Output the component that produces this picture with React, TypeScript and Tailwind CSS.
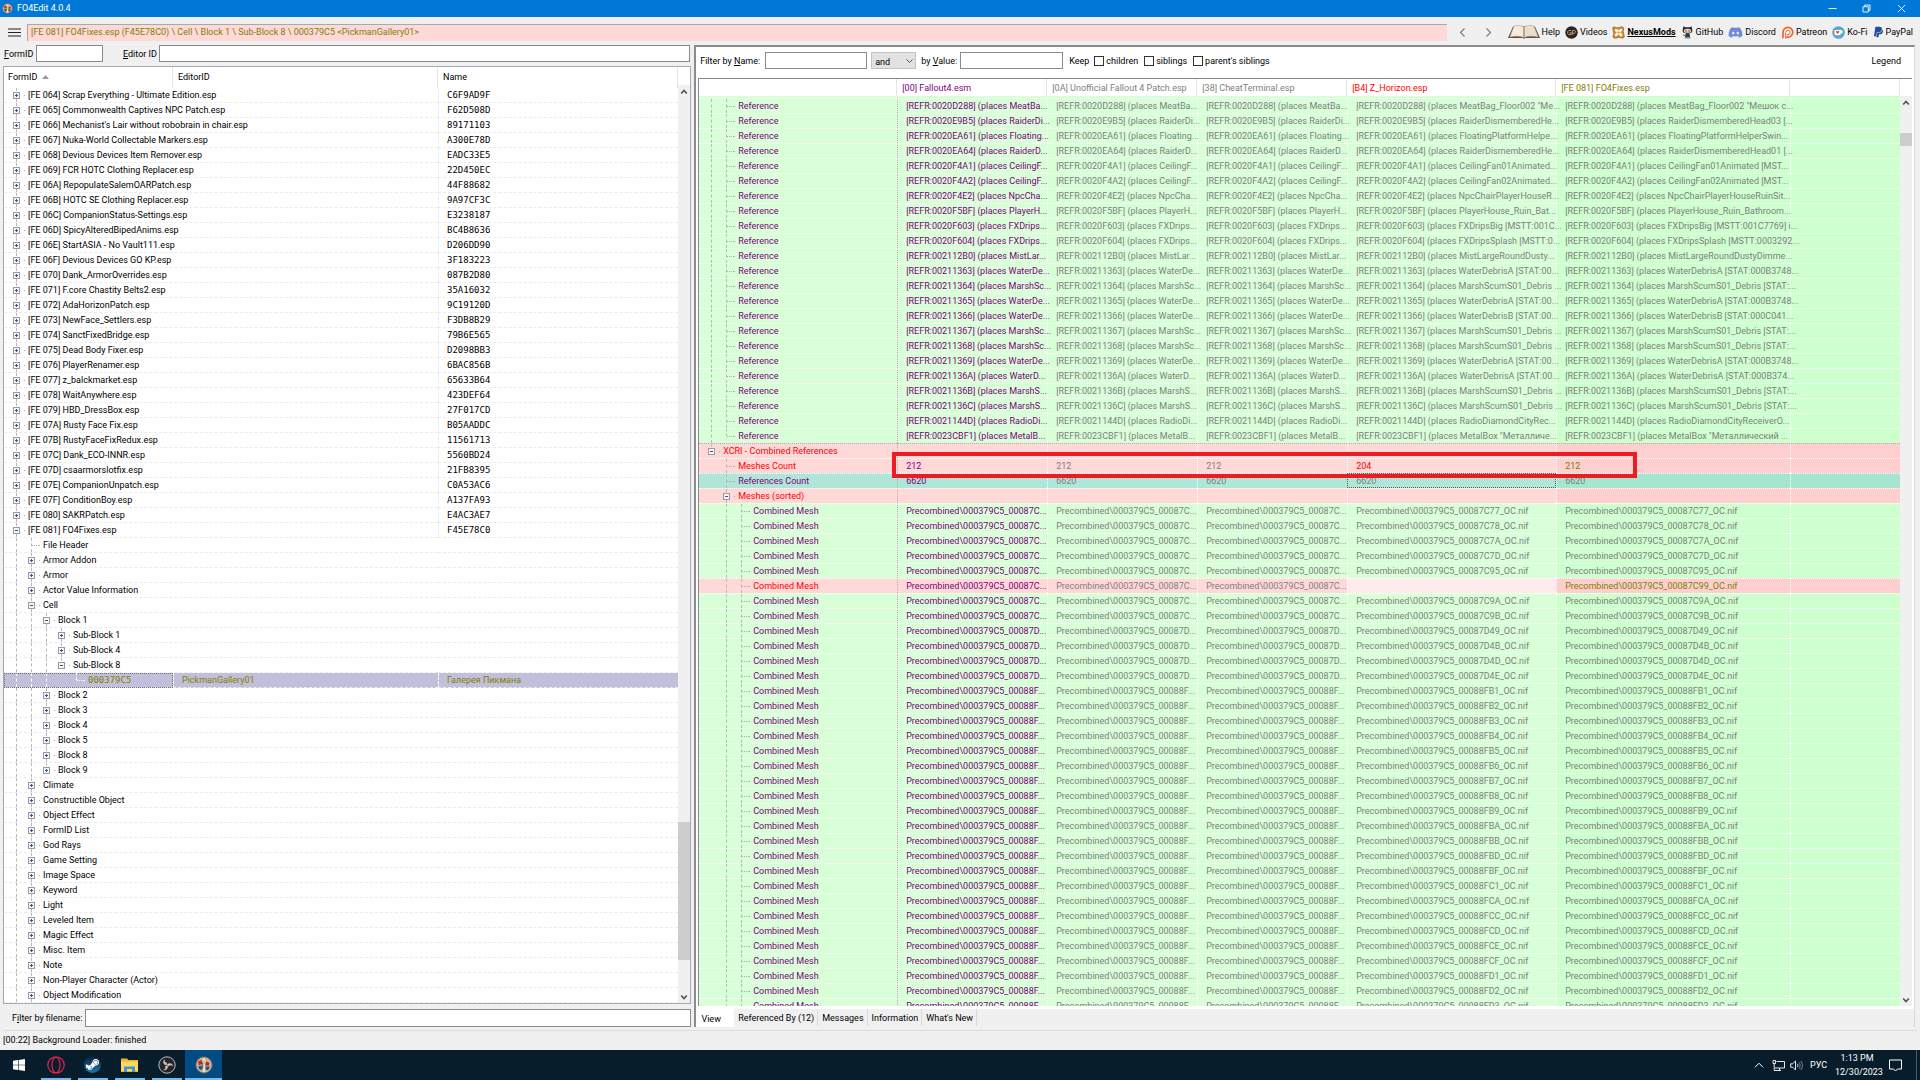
import type { ReactNode } from "react";
import { clsx } from "clsx";
import { FaDiscord, FaPaypal, FaSteamSymbol } from "react-icons/fa";

/* ---------- data ---------- */

interface TreeNode {
  label: string;
  level: number;
  state?: "open" | "closed";
  /** one flag per ancestor level, true when its guide line runs through the row */
  guides?: boolean[];
  last?: boolean;
  name?: string;
  editorId?: string;
  selected?: boolean;
}

const plugins: [string, string][] = [
  ["[FE 064] Scrap Everything - Ultimate Edition.esp", "C6F9AD9F"],
  ["[FE 065] Commonwealth Captives NPC Patch.esp", "F62D508D"],
  ["[FE 066] Mechanist's Lair without robobrain in chair.esp", "89171103"],
  ["[FE 067] Nuka-World Collectable Markers.esp", "A300E78D"],
  ["[FE 068] Devious Devices Item Remover.esp", "EADC33E5"],
  ["[FE 069] FCR HOTC Clothing Replacer.esp", "22D450EC"],
  ["[FE 06A] RepopulateSalemOARPatch.esp", "44F88682"],
  ["[FE 06B] HOTC SE Clothing Replacer.esp", "9A97CF3C"],
  ["[FE 06C] CompanionStatus-Settings.esp", "E3238187"],
  ["[FE 06D] SpicyAlteredBipedAnims.esp", "BC4B8636"],
  ["[FE 06E] StartASIA - No Vault111.esp", "D206DD90"],
  ["[FE 06F] Devious Devices GO KP.esp", "3F183223"],
  ["[FE 070] Dank_ArmorOverrides.esp", "087B2D80"],
  ["[FE 071] F.core Chastity Belts2.esp", "35A16032"],
  ["[FE 072] AdaHorizonPatch.esp", "9C19120D"],
  ["[FE 073] NewFace_Settlers.esp", "F3DB8B29"],
  ["[FE 074] SanctFixedBridge.esp", "79B6E565"],
  ["[FE 075] Dead Body Fixer.esp", "D2098BB3"],
  ["[FE 076] PlayerRenamer.esp", "6BAC856B"],
  ["[FE 077] z_balckmarket.esp", "65633B64"],
  ["[FE 078] WaitAnywhere.esp", "423DEF64"],
  ["[FE 079] HBD_DressBox.esp", "27F017CD"],
  ["[FE 07A] Rusty Face Fix.esp", "B05AADDC"],
  ["[FE 07B] RustyFaceFixRedux.esp", "11561713"],
  ["[FE 07C] Dank_ECO-INNR.esp", "5560BD24"],
  ["[FE 07D] csaarmorslotfix.esp", "21FB8395"],
  ["[FE 07E] CompanionUnpatch.esp", "C0A53AC6"],
  ["[FE 07F] ConditionBoy.esp", "A137FA93"],
  ["[FE 080] SAKRPatch.esp", "E4AC3AE7"],
];

const group = (label: string): TreeNode => ({ label, level: 1, state: "closed" });
const block = (label: string, last = false): TreeNode => ({ label, level: 2, state: "closed", last });

const nodes: TreeNode[] = [
  ...plugins.map(([label, name]): TreeNode => ({ label, name, level: 0, state: "closed" })),
  { label: "[FE 081] FO4Fixes.esp", name: "F45E78C0", level: 0, state: "open" },
  { label: "File Header", level: 1 },
  group("Armor Addon"),
  group("Armor"),
  group("Actor Value Information"),
  { label: "Cell", level: 1, state: "open" },
  { label: "Block 1", level: 2, state: "open" },
  { label: "Sub-Block 1", level: 3, state: "closed" },
  { label: "Sub-Block 4", level: 3, state: "closed" },
  { label: "Sub-Block 8", level: 3, state: "open", last: true },
  {
    label: "000379C5",
    level: 4,
    guides: [true, true, true, false],
    last: true,
    editorId: "PickmanGallery01",
    name: "Галерея Пикмана",
    selected: true,
  },
  block("Block 2"),
  block("Block 3"),
  block("Block 4"),
  block("Block 5"),
  block("Block 8"),
  block("Block 9", true),
  ...[
    "Climate",
    "Constructible Object",
    "Object Effect",
    "FormID List",
    "God Rays",
    "Game Setting",
    "Image Space",
    "Keyword",
    "Light",
    "Leveled Item",
    "Magic Effect",
    "Misc. Item",
    "Note",
    "Non-Player Character (Actor)",
    "Object Modification",
  ].map(group),
];

// id, short text, text in the Z_Horizon column, text in the FO4Fixes column
const references: [string, string, string, string][] = [
  ["0020D288", "MeatBa...", 'MeatBag_Floor002 "Me...', 'MeatBag_Floor002 "Мешок с...'],
  ["0020E9B5", "RaiderDi...", "RaiderDismemberedHe...", "RaiderDismemberedHead03 [..."],
  ["0020EA61", "Floating...", "FloatingPlatformHelpe...", "FloatingPlatformHelperSwin..."],
  ["0020EA64", "RaiderD...", "RaiderDismemberedHe...", "RaiderDismemberedHead01 [..."],
  ["0020F4A1", "CeilingF...", "CeilingFan01Animated...", "CeilingFan01Animated [MST..."],
  ["0020F4A2", "CeilingF...", "CeilingFan02Animated...", "CeilingFan02Animated [MST..."],
  ["0020F4E2", "NpcCha...", "NpcChairPlayerHouseR...", "NpcChairPlayerHouseRuinSit..."],
  ["0020F5BF", "PlayerH...", "PlayerHouse_Ruin_Bat...", "PlayerHouse_Ruin_Bathroom..."],
  ["0020F603", "FXDrips...", "FXDripsBig [MSTT:001C...", "FXDripsBig [MSTT:001C7769] i..."],
  ["0020F604", "FXDrips...", "FXDripsSplash [MSTT:0...", "FXDripsSplash [MSTT:0003292..."],
  ["002112B0", "MistLar...", "MistLargeRoundDusty...", "MistLargeRoundDustyDimme..."],
  ["00211363", "WaterDe...", "WaterDebrisA [STAT:00...", "WaterDebrisA [STAT:000B3748..."],
  ["00211364", "MarshSc...", "MarshScumS01_Debris ...", "MarshScumS01_Debris [STAT:..."],
  ["00211365", "WaterDe...", "WaterDebrisA [STAT:00...", "WaterDebrisA [STAT:000B3748..."],
  ["00211366", "WaterDe...", "WaterDebrisB [STAT:00...", "WaterDebrisB [STAT:000C041..."],
  ["00211367", "MarshSc...", "MarshScumS01_Debris ...", "MarshScumS01_Debris [STAT:..."],
  ["00211368", "MarshSc...", "MarshScumS01_Debris ...", "MarshScumS01_Debris [STAT:..."],
  ["00211369", "WaterDe...", "WaterDebrisA [STAT:00...", "WaterDebrisA [STAT:000B3748..."],
  ["0021136A", "WaterD...", "WaterDebrisA [STAT:00...", "WaterDebrisA [STAT:000B374..."],
  ["0021136B", "MarshS...", "MarshScumS01_Debris ...", "MarshScumS01_Debris [STAT:..."],
  ["0021136C", "MarshS...", "MarshScumS01_Debris ...", "MarshScumS01_Debris [STAT:..."],
  ["0021144D", "RadioDi...", "RadioDiamondCityRec...", "RadioDiamondCityReceiverO..."],
  ["0023CBF1", "MetalB...", 'MetalBox "Металличе...', 'MetalBox "Металлический ...'],
];

const meshes = [
  "87C77", "87C78", "87C7A", "87C7D", "87C95", "87C99", "87C9A", "87C9B",
  "87D49", "87D4B", "87D4D", "87D4E", "88FB1", "88FB2", "88FB3", "88FB4",
  "88FB5", "88FB6", "88FB7", "88FB8", "88FB9", "88FBA", "88FBB", "88FBD",
  "88FBF", "88FC1", "88FCA", "88FCC", "88FCD", "88FCE", "88FCF", "88FD1",
  "88FD2", "88FD3",
];

type Tone = "same" | "conflict" | "focused";

const tones: Record<Tone, { light: string; dark: string; label: string; own: string }> = {
  same: { light: "bg-[#d8ffd8]", dark: "bg-[#ceffce]", label: "text-[#800080]", own: "text-[#808080]" },
  conflict: { light: "bg-[#ffd8d8]", dark: "bg-[#ffcece]", label: "text-[#ff0000]", own: "text-[#808000]" },
  focused: { light: "bg-[#b0e6d8]", dark: "bg-[#a6e6ce]", label: "text-[#800080]", own: "text-[#808080]" },
};

/* ---------- small parts ---------- */

function Expander({ open, label }: { open: boolean; label: string }) {
  return (
    <button type="button" aria-label={`${open ? "Collapse" : "Expand"} ${label}`} className="relative block size-[7px]">
      <svg viewBox="0 0 7 7" className="block size-[7px]">
        <rect x=".5" y=".5" width="6" height="6" fill="#f6f6f6" stroke="#9b9b9b" />
        <path d={open ? "M2 3.5h3" : "M2 3.5h3M3.5 2v3"} stroke="#3c50a0" />
      </svg>
    </button>
  );
}

function Guide({ visible = true, half = false, white = false }: { visible?: boolean; half?: boolean; white?: boolean }) {
  return (
    <span className="flex w-[15px] shrink-0 justify-center self-stretch">
      {visible && (
        <span className={clsx("w-px border-l border-dashed", half ? "h-1/2" : "h-full", white ? "border-white" : "border-[#b9b9b9]")} />
      )}
    </span>
  );
}

interface TreeLabelProps {
  level: number;
  state?: "open" | "closed";
  guides?: boolean[];
  last?: boolean;
  white?: boolean;
  label: string;
  children: ReactNode;
}

/** Indentation guides, the expander and the text of a tree row */
function TreeLabel({ level, state, guides, last, white, label, children }: TreeLabelProps) {
  return (
    <div className="flex h-[14px] items-center overflow-hidden">
      {Array.from({ length: level }, (_, i) => (
        <Guide key={i} visible={guides ? guides[i] : true} white={white} />
      ))}
      <span className="relative flex shrink-0 self-stretch">
        <Guide half={last} white={white} />
        {state ? (
          <span className="absolute inset-0 flex items-center justify-center">
            <Expander open={state === "open"} label={label} />
          </span>
        ) : (
          <span className={clsx("absolute top-1/2 right-0 w-[7px] border-t border-dotted", white ? "border-white" : "border-[#b0b0b0]")} />
        )}
      </span>
      <span className={clsx("mr-[3px] w-px shrink-0 border-t border-dotted", white ? "border-white" : "border-[#b0b0b0]")} />
      {children}
    </div>
  );
}

function ArrowIcon({ down = false }: { down?: boolean }) {
  return (
    <svg viewBox="0 0 8 8" className="size-2" fill="none" stroke="#505050" strokeWidth="1.6">
      <path d={down ? "M1.2 2.5 4 5.5 6.8 2.5" : "M1.2 5.5 4 2.5 6.8 5.5"} />
    </svg>
  );
}

function ScrollBar({ children, label }: { children: ReactNode; label: string }) {
  return (
    <div className="flex min-h-0 w-3 flex-1 flex-col bg-[#f0f0f0]">
      <button type="button" aria-label={`Scroll ${label} up`} className="flex h-[13px] items-center justify-center">
        <ArrowIcon />
      </button>
      {children}
      <button type="button" aria-label={`Scroll ${label} down`} className="flex h-[13px] items-center justify-center">
        <ArrowIcon down />
      </button>
    </div>
  );
}

function AppIcon({ className }: { className: string }) {
  return (
    <svg viewBox="0 0 18 18" className={className}>
      <circle cx="9" cy="9" r="8.3" fill="#b9b5a6" stroke="#5a564c" strokeWidth="1" />
      <path d="M3 5.5 6.5 4l.8 3.8L4 9.5z" fill="#c8261d" />
      <path d="M11 5.2 14.6 7l-1.2 3-2.6-1z" fill="#c8261d" />
      <path d="M3.2 10.5 7 9.6l-.4 4.6-2-.7z" fill="#23508f" />
      <path d="M11.4 10.4l3.4.4-1.6 3.2-2 .3z" fill="#23508f" />
      <path d="M7.6 2.5h2.6l.5 5.2-.6 8H7.8l.3-7z" fill="#f1e7c4" />
      <path d="M8.6 4.5h1l.2 3h-1.5z" fill="#d6a63a" />
      <path d="M6.4 6.5l1.3.6v6M10.9 7v6.5" stroke="#3a3732" strokeWidth=".7" fill="none" />
    </svg>
  );
}

/* ---------- window chrome ---------- */

function TitleBar() {
  return (
    <header className="flex h-[17px] shrink-0 items-center bg-[#0078d7] pr-px pl-[2px] text-white">
      <AppIcon className="size-[11px]" />
      <h1 className="ml-1 flex-1 leading-[17px]">FO4Edit 4.0.4</h1>
      <button type="button" aria-label="Minimize" className="flex h-full w-[34px] items-center justify-center">
        <svg viewBox="0 0 9 9" className="size-[9px]" stroke="#fff" strokeWidth=".9"><path d="M.5 4.5h8" /></svg>
      </button>
      <button type="button" aria-label="Restore" className="flex h-full w-[34px] items-center justify-center">
        <svg viewBox="0 0 9 9" className="size-[9px]" fill="none" stroke="#fff" strokeWidth=".9"><path d="M1 2.7h5.3V8H1zM2.7 2.7V1H8v5.3H6.3" /></svg>
      </button>
      <button type="button" aria-label="Close" className="flex h-full w-9 items-center justify-center">
        <svg viewBox="0 0 9 9" className="size-[9px]" stroke="#fff" strokeWidth=".9"><path d="M1 1l7 7M8 1 1 8" /></svg>
      </button>
    </header>
  );
}

function BookIcon() {
  return (
    <svg viewBox="0 0 32 14" className="h-[14px] w-8">
      <path d="M5 1.5 0 13h14.500l1.500.8 1.500-.8H32L27 1.500z" fill="#6b4a34" />
      <path d="M6 1C9.500 0 13.500.3 16 2.200V12.600C12 10.800 6.500 10.800 1.800 12z" fill="#f3ebdf" stroke="#a89684" strokeWidth=".5" />
      <path d="M26 1C22.500 0 18.500.3 16 2.200V12.600C20 10.800 25.500 10.800 30.200 12z" fill="#e9ddcc" stroke="#a89684" strokeWidth=".5" />
      <path d="M16 2.200v10.400" stroke="#8a7460" strokeWidth=".8" />
    </svg>
  );
}

function VideosIcon() {
  return (
    <svg viewBox="0 0 13 13" className="size-[13px]">
      <circle cx="6.500" cy="6.500" r="6.200" fill="#2b2622" />
      <path d="M6 4.500H3.800L2.800 5.500v2.200l1 1H6V6.700H4.800M7.300 9V4.500h2.200l.9.8v1l-.9.8H7.300" fill="none" stroke="#c9ab7c" strokeWidth=".9" />
    </svg>
  );
}

function NexusIcon() {
  return (
    <svg viewBox="0 0 13 13" className="size-[13px]">
      <path d="M1.500.8 5 1.800 10.500.7l1.300 1.200-.6 3.300 1.200 5.800-1.500 1.200-3.600-.8-5 .9L.8 10.800l1-3.600L.7 2z" fill="#dd8a2c" stroke="#6e5a48" strokeWidth=".6" />
      <path d="M3 3.200 5.200 3l1.300 1.600L8.200 2.900l2-.2-.1 2-1.900 1.800 2 1.600v2.200l-2.100-.1-1.600-1.900L4.800 10l-2 .2.200-2 1.700-1.700L3 5z" fill="#fff3e0" />
      <circle cx="6.500" cy="6.500" r="1.100" fill="#dd8a2c" />
    </svg>
  );
}

function GitHubIcon() {
  return (
    <svg viewBox="0 0 13 13" className="size-[13px]">
      <path d="M2.300.3 4.300 1.300h4.400l2-1 .3 2.500c.9 1.700.3 3.700-1 4.300H3C1.700 6.500 1.100 4.400 2 2.800z" fill="#2a2a2c" />
      <ellipse cx="6.500" cy="4.900" rx="3.700" ry="2.100" fill="#f0cdb8" />
      <circle cx="4.900" cy="4.900" r=".7" fill="#59312a" />
      <circle cx="8.100" cy="4.900" r=".7" fill="#59312a" />
      <path d="M5 7.200h3.200l.5 4.300H4.500zM4.500 10 2 8.700" fill="#2e3b45" stroke="#2e3b45" strokeWidth=".8" />
      <ellipse cx="6.500" cy="12" rx="3.500" ry=".8" fill="#8fb4c6" />
    </svg>
  );
}

function PatreonIcon() {
  return (
    <svg viewBox="0 0 13 13" className="size-[13px]">
      <path d="M2 12.200V6.500a4.900 4.900 0 1 1 4.900 4.700H5" fill="none" stroke="#f1622a" strokeWidth="1.700" />
      <path d="M4.700 12.600V6.500a2.200 2.200 0 1 1 2.300 2.200H6" fill="#fff" stroke="#f1622a" strokeWidth="1" />
    </svg>
  );
}

function KofiIcon() {
  return (
    <svg viewBox="0 0 13 13" className="size-[13px]">
      <circle cx="6.500" cy="6.500" r="6.300" fill="#57a8cc" />
      <path d="M2.500 4h6.300c2.600 0 2.600 3.600 0 3.600-.2 1.200-.8 1.700-1.800 1.700H4.300c-1.200 0-1.800-.8-1.800-2z" fill="#fff" />
      <path d="M5.600 8 3.900 6.300c-.6-.9.800-1.900 1.700-.8.900-1.100 2.300-.1 1.700.8z" fill="#f0484c" />
    </svg>
  );
}

const links: { label: string; icon: ReactNode; strong?: boolean }[] = [
  { label: "Help", icon: <BookIcon /> },
  { label: "Videos", icon: <VideosIcon /> },
  { label: "NexusMods", icon: <NexusIcon />, strong: true },
  { label: "GitHub", icon: <GitHubIcon /> },
  { label: "Discord", icon: <FaDiscord className="size-[15px] text-[#7289da]" /> },
  { label: "Patreon", icon: <PatreonIcon /> },
  { label: "Ko-Fi", icon: <KofiIcon /> },
  { label: "PayPal", icon: <FaPaypal className="h-3 w-[11px] text-[#1f4f94]" /> },
];

function Toolbar() {
  return (
    <div className="flex h-7 shrink-0 items-center pt-[2px] pr-[7px] pl-2">
      <button type="button" aria-label="Menu" className="w-[19px]">
        <svg viewBox="0 0 13 9" className="h-[9px] w-[13px]" stroke="#222" strokeWidth="1"><path d="M0 1h13M0 4.500h13M0 8h13" /></svg>
      </button>
      <div className="h-[17px] min-w-0 flex-1 truncate border-t border-l border-[#a9a9a9] bg-[#ffd8d8] pl-[3px] leading-[14px] text-[#808000]">
        [FE 081] FO4Fixes.esp (F45E78C0) \ Cell \ Block 1 \ Sub-Block 8 \ 000379C5 &lt;PickmanGallery01&gt;
      </div>
      <button type="button" aria-label="Back" className="ml-[11px] w-[26px]">
        <svg viewBox="0 0 9 9" className="size-[9px]" fill="none" stroke="#777" strokeWidth="1.100"><path d="M6.500.5 2.500 4.500l4 4" /></svg>
      </button>
      <button type="button" aria-label="Forward" className="w-6">
        <svg viewBox="0 0 9 9" className="size-[9px]" fill="none" stroke="#777" strokeWidth="1.100"><path d="M2.500.5l4 4-4 4" /></svg>
      </button>
      <nav className="flex items-center gap-[5px]">
        {links.map(({ label, icon, strong }) => (
          <a key={label} href="#" className="flex items-center gap-[2px]">
            {icon}
            <span className={clsx(strong && "font-bold underline")}>{label}</span>
          </a>
        ))}
      </nav>
    </div>
  );
}

/* ---------- left pane ---------- */

const inputClass = "border border-[#8a8a8a] bg-white px-1 outline-none";

function PluginTree() {
  return (
    <div className="mt-1 flex min-h-0 flex-1 border border-[#a5a9b2] bg-white">
      <div className="min-w-0 flex-1 overflow-hidden">
        <table className="w-full table-fixed border-separate border-spacing-0">
          <colgroup>
            <col className="w-[169px]" />
            <col className="w-[265px]" />
            <col />
          </colgroup>
          <thead>
            <tr className="text-left">
              <th className="h-[21px] border-r border-[#e5e5e5] p-0 pb-[2px] pl-1 font-normal">
                <span className="flex items-center gap-[5px]">
                  FormID
                  <svg viewBox="0 0 7 4" className="h-1 w-[7px]"><path d="M0 4 3.500 0 7 4z" fill="#9a9a9a" /></svg>
                </span>
              </th>
              <th className="h-[21px] border-r border-[#e5e5e5] p-0 pb-[2px] pl-[5px] font-normal">EditorID</th>
              <th className="h-[21px] border-r border-[#e5e5e5] p-0 pb-[2px] pl-[5px] font-normal">Name</th>
            </tr>
          </thead>
          <tbody>
            {nodes.map((node, i) => {
              const cell = clsx(
                "h-[15px] overflow-hidden border-b border-dashed border-[#ececec] p-0 leading-[14px]",
                node.selected && "bg-[#c0c0da] text-[#808000]",
              );
              return (
                <tr key={i}>
                  {/* names run on into the EditorID column when it is empty */}
                  <td
                    colSpan={node.editorId ? 1 : 2}
                    className={clsx(cell, "pl-[5px]", node.selected && "outline-1 -outline-offset-1 outline-[#707080] outline-dotted")}
                  >
                    <TreeLabel {...node} white={node.selected}>
                      <span className={clsx(node.selected && "font-['DejaVu_Sans_Mono',monospace]")}>{node.label}</span>
                    </TreeLabel>
                  </td>
                  {node.editorId && <td className={clsx(cell, "border-l border-l-white pl-2")}>{node.editorId}</td>}
                  <td
                    className={clsx(
                      cell,
                      "border-l pl-2",
                      node.selected ? "border-l-white" : node.level === 0 ? "border-l-[#ececec]" : "border-l-transparent",
                      node.level === 0 && "font-['DejaVu_Sans_Mono',monospace]",
                    )}
                  >
                    {node.name}
                  </td>
                </tr>
              );
            })}
          </tbody>
        </table>
      </div>
      <div className="flex w-3 flex-col">
        <div className="h-[18px] shrink-0" />
        <ScrollBar label="plugins">
          <div className="grow-[725]" />
          <div className="grow-[138] bg-[#cdcdcd]" />
          <div className="grow-[30]" />
        </ScrollBar>
      </div>
    </div>
  );
}

function LeftPane() {
  return (
    <section className="flex w-[36%] shrink-0 flex-col pl-[3px]">
      <div className="flex h-[17px] shrink-0 items-stretch pl-px leading-[18px]">
        <label htmlFor="form-id" className="w-8"><u>F</u>ormID</label>
        <input id="form-id" className={clsx(inputClass, "w-[67px]")} />
        <label htmlFor="editor-id" className="ml-5 w-9"><u>E</u>ditor ID</label>
        <input id="editor-id" className={clsx(inputClass, "mr-px min-w-0 flex-1")} />
      </div>
      <PluginTree />
      <div className="mt-[5px] flex h-[18px] shrink-0 pl-[9px] leading-[18px]">
        <label htmlFor="filter-file" className="w-[73px]">F<u>i</u>lter by filename:</label>
        <input id="filter-file" className={clsx(inputClass, "min-w-0 flex-1")} />
      </div>
    </section>
  );
}

/* ---------- right pane ---------- */

interface ViewRowProps {
  tone: Tone;
  level: number;
  label: string;
  values?: string[];
  state?: "open" | "closed";
  guides?: boolean[];
  last?: boolean;
  horizon?: string;
}

function ViewRow({ tone, level, label, values = [], state, guides, last, horizon }: ViewRowProps) {
  const t = tones[tone];
  const missing = tone === "conflict" && level === 2;
  const cell = clsx(
    "h-[15px] border-t border-dotted p-0 leading-[14px]",
    level === 0 ? "border-t-[#b0b0b0]" : "border-t-white",
  );
  const valueCell = clsx(cell, "border-l border-l-white pl-2");
  return (
    <tr>
      <td className={clsx(cell, t.light, t.label, "pl-[5px]")}>
        <TreeLabel level={level} state={state} guides={guides} last={last} label={label}>
          {label}
        </TreeLabel>
      </td>
      <td className={clsx(cell, t.light, "border-l border-l-[#b0b0b0] pl-2 text-[#800080]")}>{values[0]}</td>
      <td className={clsx(valueCell, t.light, "text-[#808080]")}>{values[1]}</td>
      <td className={clsx(valueCell, t.light, "text-[#808080]")}>{values[2]}</td>
      <td
        className={clsx(
          valueCell,
          missing ? "bg-[#ffebeb]" : t.light,
          horizon ?? "text-[#808080]",
          tone === "focused" && "outline-1 -outline-offset-1 outline-[#506060] outline-dotted",
        )}
      >
        {values[3]}
      </td>
      <td className={clsx(valueCell, t.dark, t.own)}>{values[4]}</td>
      <td className={clsx(valueCell, t.dark)} />
    </tr>
  );
}

const columns = [
  { title: "", color: "" },
  { title: "[00] Fallout4.esm", color: "text-[#800080]" },
  { title: "[0A] Unofficial Fallout 4 Patch.esp", color: "text-[#808080]" },
  { title: "[38] CheatTerminal.esp", color: "text-[#808080]" },
  { title: "[B4] Z_Horizon.esp", color: "text-[#ff0000]" },
  { title: "[FE 081] FO4Fixes.esp", color: "text-[#808000]" },
  { title: "", color: "" },
];

function RecordView() {
  return (
    <div className="mx-[2px] flex min-h-0 flex-1 border-t border-l border-[#828790]">
      <div className="relative min-w-0 flex-1 overflow-hidden">
        <table className="w-full table-fixed border-separate border-spacing-0">
          <colgroup>
            <col className="w-[198px]" />
            <col className="w-[150px]" />
            <col className="w-[150px]" />
            <col className="w-[150px]" />
            <col className="w-[209px]" />
            <col className="w-[234px]" />
            <col />
          </colgroup>
          <thead>
            <tr className="text-left">
              {columns.map(({ title, color }, i) => (
                <th key={i} className={clsx("h-[17px] border-r border-[#e5e5e5] p-0 pt-px pl-[5px] leading-4 font-normal", color)}>
                  {title}
                </th>
              ))}
            </tr>
          </thead>
          <tbody>
            <tr>
              <td colSpan={5} className="h-[2px] bg-[#d8ffd8] p-0" />
              <td colSpan={2} className="h-[2px] bg-[#ceffce] p-0" />
            </tr>
            {references.map(([id, short, horizonText, fixesText], i) => {
              const text = `[REFR:${id}] (places ${short}`;
              return (
                <ViewRow
                  key={id}
                  tone="same"
                  level={1}
                  label="Reference"
                  last={i === references.length - 1}
                  values={[text, text, text, `[REFR:${id}] (places ${horizonText}`, `[REFR:${id}] (places ${fixesText}`]}
                />
              );
            })}
            <ViewRow tone="conflict" level={0} state="open" last label="XCRI - Combined References" />
            <ViewRow
              tone="conflict"
              level={1}
              guides={[false]}
              label="Meshes Count"
              values={["212", "212", "212", "204", "212"]}
              horizon="text-[#ff0000]"
            />
            <ViewRow tone="focused" level={1} guides={[false]} label="References Count" values={["6620", "6620", "6620", "6620", "6620"]} />
            <ViewRow tone="conflict" level={1} guides={[false]} state="open" label="Meshes (sorted)" />
            {meshes.map((id) => {
              const short = `Precombined\\000379C5_000${id.slice(0, 3)}...`;
              const full = `Precombined\\000379C5_000${id}_OC.nif`;
              const conflict = id === "87C99";
              return (
                <ViewRow
                  key={id}
                  tone={conflict ? "conflict" : "same"}
                  level={2}
                  guides={[false, true]}
                  label="Combined Mesh"
                  values={[short, short, short, conflict ? "" : full, full]}
                />
              );
            })}
          </tbody>
        </table>
        {/* marker drawn over the Meshes Count row */}
        <div className="absolute top-[373px] left-[193px] h-[26px] w-[745px] border-4 border-[#ed1c24]" />
      </div>
      <div className="flex w-3 flex-col">
        <div className="h-[17px] shrink-0" />
        <ScrollBar label="record">
          <div className="grow-[24]" />
          <div className="grow-[13] bg-[#cdcdcd]" />
          <div className="grow-[849]" />
        </ScrollBar>
      </div>
    </div>
  );
}

function KeepOption({ id, label }: { id: string; label: string }) {
  return (
    <span className="flex items-center gap-[2px]">
      <input id={id} type="checkbox" className="size-[10px] appearance-none border border-[#333] bg-white" />
      <label htmlFor={id}>{label}</label>
    </span>
  );
}

const tabs = ["Referenced By (12)", "Messages", "Information", "What's New"];

function RightPane() {
  return (
    <section className="mr-[5px] ml-[3px] flex min-w-0 flex-1 flex-col border-t-2 border-r border-l-2 border-t-[#8c8c8c] border-r-[#d9d9d9] border-l-[#8c8c8c] bg-white">
      <div className="flex h-[31px] shrink-0 items-start pt-[5px] pr-[13px] pl-1 leading-[18px]">
        <label htmlFor="by-name" className="w-[65px]">Filter by <u>N</u>ame:</label>
        <input id="by-name" className={clsx(inputClass, "h-[17px] w-[102px]")} />
        <span className="relative ml-1">
          <select aria-label="Filter operator" className="block h-[17px] w-[45px] appearance-none border border-[#c4c4c4] bg-[#e2e2e2] pl-[3px]">
            <option>and</option>
            <option>or</option>
          </select>
          <svg viewBox="0 0 7 5" className="pointer-events-none absolute top-1/2 right-[3px] h-[5px] w-[7px] -translate-y-1/2" fill="none" stroke="#444" strokeWidth=".9">
            <path d="M.5 1l3 3 3-3" />
          </svg>
        </span>
        <label htmlFor="by-value" className="ml-[5px] w-[39px]">by <u>V</u>alue:</label>
        <input id="by-value" className={clsx(inputClass, "h-[17px] w-[103px]")} />
        <span className="mr-[5px] ml-[6px]">Keep</span>
        <div className="flex flex-1 gap-[6px]">
          <KeepOption id="keep-children" label="children" />
          <KeepOption id="keep-siblings" label="siblings" />
          <KeepOption id="keep-parents" label="parent's siblings" />
        </div>
        <button type="button">Legend</button>
      </div>
      <RecordView />
      <div className="mt-[3px] flex h-[18px] shrink-0 bg-[#f0f0f0]" role="tablist">
        <button type="button" role="tab" aria-selected className="w-[38px] bg-white pt-px pr-2">View</button>
        {tabs.map((tab) => (
          <button key={tab} type="button" role="tab" aria-selected={false} className="h-[17px] border-r border-[#d9d9d9] pr-[3px] pl-1">
            {tab}
          </button>
        ))}
      </div>
    </section>
  );
}

/* ---------- taskbar ---------- */

function TaskButton({ label, active = false, children }: { label: string; active?: boolean; children: ReactNode }) {
  return (
    <button
      type="button"
      aria-label={label}
      className={clsx("flex h-full w-[37px] flex-col items-center", active && "bg-[#004b84]")}
    >
      <span className="flex flex-1 items-center pt-px">{children}</span>
      <span className={clsx("h-[2px] bg-[#76b9ed]", active ? "w-full" : "w-[30px]")} />
    </button>
  );
}

function Taskbar() {
  return (
    <footer className="flex h-[30px] shrink-0 items-stretch bg-[#071d2b] text-white">
      <button type="button" aria-label="Start" className="flex w-[37px] items-center justify-center">
        <svg viewBox="0 0 12 12" className="size-3" fill="#fff">
          <path d="M0 1.700 5 1v4.700H0zM5.600.9 12 0v5.700H5.600zM0 6.300h5V11l-5-.7zM5.600 6.300H12V12l-6.400-.9z" />
        </svg>
      </button>
      <TaskButton label="Opera GX">
        <svg viewBox="0 0 18 18" className="size-[18px]" fill="none" stroke="#e0224e">
          <circle cx="9" cy="9" r="8.200" strokeWidth="1.200" />
          <ellipse cx="9" cy="9" rx="4" ry="7.800" strokeWidth="1.200" />
        </svg>
      </TaskButton>
      <TaskButton label="Steam">
        <span className="flex size-[17px] items-center justify-center rounded-full bg-linear-to-b from-[#0b1d3c] to-[#1679b3]">
          <FaSteamSymbol className="size-[15px]" />
        </span>
      </TaskButton>
      <TaskButton label="File Explorer">
        <svg viewBox="0 0 17 14" className="h-[14px] w-[17px]">
          <path d="M0 .5h6l1.500 1.500H17V14H0z" fill="#f0b429" />
          <path d="M0 3.500h17V13H0z" fill="#ffd75e" />
          <path d="M3 14V8.500h11V14h-3v-3H6v3z" fill="#3d95dd" />
        </svg>
      </TaskButton>
      <TaskButton label="OBS Studio">
        <svg viewBox="0 0 18 18" className="size-[18px]">
          <circle cx="9" cy="9" r="8.200" fill="#26252a" stroke="#b9b9bb" strokeWidth="1" />
          <path d="M8.500 9.300C5.500 8.500 4.800 6 6.300 3.800c-.2 2 .8 3 2.700 3.300M9 8.800c2.200-2.100 4.800-1.500 5.800 1-1.600-1.200-3-1-4.300.5M9.400 9.500c.7 3-1.200 4.800-3.800 4.500 1.900-.7 2.400-2 1.800-3.800" fill="#c9c9cb" stroke="#c9c9cb" strokeWidth=".5" />
        </svg>
      </TaskButton>
      <TaskButton label="FO4Edit" active>
        <AppIcon className="size-[18px]" />
      </TaskButton>
      <div className="ml-auto flex items-center">
        <button type="button" aria-label="Show hidden icons">
          <svg viewBox="0 0 10 6" className="h-[6px] w-[10px]" fill="none" stroke="#fff"><path d="M1 5.300 5 1.200l4 4.100" /></svg>
        </button>
        <svg viewBox="0 0 13 11" className="ml-2 h-[11px] w-[13px]" fill="none" stroke="#fff" strokeWidth=".9">
          <path d="M4.500 1.500H12.500V8H3M1 .5h2.500v3H1zM2.200 3.500V10.500H9M7.500 8v2.500" />
        </svg>
        <svg viewBox="0 0 13 11" className="ml-[5px] h-[11px] w-[13px]" fill="none" stroke="#fff" strokeWidth=".9">
          <path d="M.7 3.800h2L5.500 1v9L2.700 7.200h-2zM7.300 3.800c.8 1 .8 2.400 0 3.400" />
          <path d="M9 2.400c1.500 1.800 1.500 4.400 0 6.200M10.700 1c2.300 2.600 2.300 6.400 0 9" stroke="#8a959d" />
        </svg>
        <span className="ml-[7px] w-[17px]">РУС</span>
        <time className="mr-[10px] ml-2 w-[44px] text-center leading-[14px]">
          <span className="block">1:13 PM</span>
          <span className="block">12/30/2023</span>
        </time>
        <button type="button" aria-label="Notifications" className="mr-[14px]">
          <svg viewBox="0 0 13 13" className="size-[13px]" fill="none" stroke="#fff"><path d="M.5 1h12v9H8.500l-2 2-2-2h-4z" /></svg>
        </button>
        <span className="mr-[3px] h-[30px] border-l border-[#4a5964]" />
      </div>
    </footer>
  );
}

export default function App() {
  return (
    <div className="flex h-screen w-full flex-col overflow-hidden bg-[#f0f0f0] font-['Roboto','Noto_Sans',sans-serif] text-[9px] leading-[14px] whitespace-nowrap text-black">
      <TitleBar />
      <Toolbar />
      <main className="flex min-h-0 flex-1">
        <LeftPane />
        <RightPane />
      </main>
      <div className="mx-[3px] mt-[3px] h-5 shrink-0 border-t border-[#dcdcdc] leading-[18px]">[00:22] Background Loader: finished</div>
      <Taskbar />
    </div>
  );
}
